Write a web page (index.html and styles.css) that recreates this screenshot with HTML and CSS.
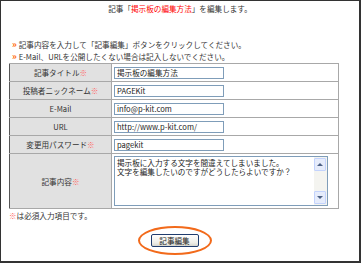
FILE: index.html
```html
<!DOCTYPE html>
<html lang="ja">
<head>
<meta charset="UTF-8">
<title>記事編集</title>
<link rel="stylesheet" href="styles.css">
</head>
<body>

<div class="frame">
  <p class="title">記事「<span class="hl">掲示板の編集方法</span>」を編集します。</p>

  <ul class="notes">
    <li>記事内容を入力して「記事編集」ボタンをクリックしてください。</li>
    <li>E-Mail、URLを公開したくない場合は記入しないでください。</li>
  </ul>

  <table class="edit-form">
    <tr>
      <th>記事タイトル<span class="mark">※</span></th>
      <td><input type="text" class="field" value="掲示板の編集方法"></td>
    </tr>
    <tr>
      <th>投稿者ニックネーム<span class="mark">※</span></th>
      <td><input type="text" class="field" value="PAGEKit"></td>
    </tr>
    <tr>
      <th>E-Mail</th>
      <td><input type="text" class="field" value="info@p-kit.com"></td>
    </tr>
    <tr>
      <th>URL</th>
      <td><input type="text" class="field" value="http://www.p-kit.com/"></td>
    </tr>
    <tr>
      <th>変更用パスワード<span class="mark">※</span></th>
      <td><input type="text" class="field" value="pagekit"></td>
    </tr>
    <tr class="tall">
      <th>記事内容<span class="mark">※</span></th>
      <td>
        <div class="memo">
          <textarea class="memo-text">掲示板に入力する文字を間違えてしまいました。
文字を編集したいのですがどうしたらよいですか？</textarea>
          <div class="scroll">
            <span class="arrow up"></span>
            <span class="arrow down"></span>
          </div>
        </div>
      </td>
    </tr>
  </table>

  <p class="req"><span class="mark">※</span>は必須入力項目です。</p>

  <div class="ring">
    <button class="btn">記事編集</button>
  </div>
</div>

</body>
</html>
```

FILE: styles.css
```css
html, body {
  margin: 0;
  background: #fff;
}

body {
  font-family: "Noto Sans CJK JP", "Noto Sans", sans-serif;
  font-size: 7.6px;
  color: #333;
}

.frame {
  width: 361px;
  height: 263px;
  box-sizing: border-box;
  border-style: solid;
  border-color: #333;
  border-width: 1px 2px 2px 1px;
  overflow: hidden;
}

.title {
  margin: 2px 0 0;
  line-height: 12px;
  text-align: center;
}

.hl {
  color: #f00;
}

.notes {
  list-style: none;
  margin: 24px 0 0;
  padding: 0 0 0 11px;
  line-height: 12px;
}

.notes li::before {
  content: "»";
  color: #f60;
  font-weight: bold;
  font-size: 9px;
  margin-right: 2px;
}

.edit-form {
  margin-left: 8px;
  width: 330px;
  border-collapse: collapse;
  border: 1px solid #9a9a9a;
  border-left-color: #555;
}

.edit-form th,
.edit-form td {
  border: 1px solid #a8a8a8;
  height: 17px;
  padding: 0 2px;
  vertical-align: middle;
}

.edit-form th {
  width: 97px;
  background: #e1e1e1;
  font-weight: normal;
  text-align: center;
  border-left-color: #555;
}

.mark {
  color: #f66;
}

.field {
  display: block;
  width: 110px;
  height: 12px;
  box-sizing: border-box;
  margin: 0;
  padding: 0 2px;
  border: 1px solid #7f9db9;
  font-family: inherit;
  font-size: 7.6px;
  color: #222;
  background: #fff;
}

.tall td {
  height: 52px;
  padding-top: 1px;
  padding-bottom: 1px;
}

.memo {
  display: flex;
  width: 214px;
  height: 50px;
  box-sizing: border-box;
  border: 1px solid #7f9db9;
}

.memo-text {
  flex: 1;
  margin: 0;
  padding: 1px 2px;
  border: none;
  resize: none;
  outline: none;
  overflow: hidden;
  font-family: inherit;
  font-size: 7.6px;
  line-height: 9px;
  color: #222;
}

.scroll {
  width: 12px;
  display: flex;
  flex-direction: column;
  justify-content: space-between;
  background: #f4f4f0;
  padding: 1px 1px 1px 0;
}

.arrow {
  display: flex;
  align-items: center;
  justify-content: center;
  height: 11px;
  border: 1px solid #c3d3fd;
  background: #e6ecfb;
  border-radius: 1px;
}

.arrow::after {
  content: "";
  border-left: 3px solid transparent;
  border-right: 3px solid transparent;
}

.up::after {
  border-bottom: 3px solid #4d6185;
}

.down::after {
  border-top: 3px solid #4d6185;
}

.req {
  margin: 1px 0 0 8px;
  line-height: 12px;
}

.ring {
  width: 74px;
  height: 29px;
  box-sizing: border-box;
  margin: 4px 0 0 137px;
  border: 2px solid #f26a1b;
  border-radius: 50%;
  display: flex;
  align-items: center;
  justify-content: center;
}

.btn {
  width: 48px;
  height: 13px;
  padding: 0;
  margin: 0 1px 0 0;
  border: 1px solid #1f3c6e;
  border-radius: 2px;
  background: linear-gradient(#ffffff, #eeeee8 70%, #d6d6ce);
  font-family: inherit;
  font-size: 7.6px;
  line-height: 11px;
  color: #222;
}
```
